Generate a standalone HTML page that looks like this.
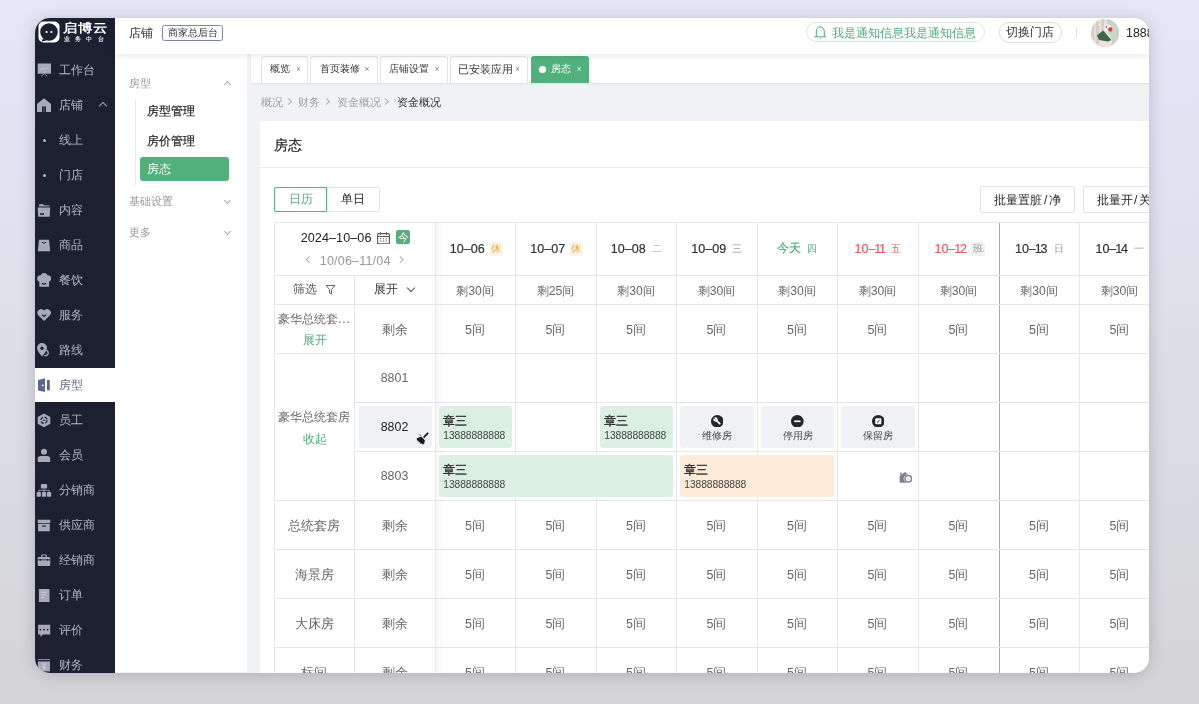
<!DOCTYPE html><html><head><meta charset="utf-8"><style>
*{box-sizing:border-box;margin:0;padding:0}
html,body{width:1199px;height:704px;overflow:hidden}
body{font-family:"Liberation Sans",sans-serif;position:relative;background:linear-gradient(180deg,#e5e7f6 0%,#e0e2f0 30%,#dbdce3 60%,#d5d5d7 100%)}
.shadow{position:absolute;left:35px;top:18px;width:1114px;height:655px;border-radius:16px;box-shadow:0 2px 16px rgba(60,60,90,.26)}
.win{position:absolute;left:0;top:0;width:1199px;height:704px;will-change:transform;clip-path:inset(18px 50px 31px 35px round 15px)}
.bg{position:absolute;left:35px;top:18px;width:1114px;height:655px;background:#f0f2f6}
.side{position:absolute;left:35px;top:18px;width:80px;height:655px;background:#1c2132}
.si{position:absolute;left:35px;width:80px;height:35px;color:#b3b6c2;font-size:12.4px;line-height:35px}
.si span{position:absolute;left:24px;top:0}
.si svg{position:absolute;left:2px;top:10px;overflow:visible}
.si .dot{position:absolute;left:7.5px;top:16px;width:3px;height:3px;border-radius:50%;background:#b3b6c2}
.si.act{background:#fff;color:#5c6680;height:34px;line-height:34px}
.si.act svg{top:10px}
.chev{position:absolute;left:65px;top:15px;width:6px;height:6px;border-left:1px solid #9ea1ae;border-top:1px solid #9ea1ae;transform:rotate(45deg)}
.hdr{position:absolute;left:115px;top:18px;width:1034px;height:36px;background:#fff;box-shadow:0 2px 6px rgba(30,30,70,.09);z-index:2}
.sub{position:absolute;left:115px;top:54px;width:131.5px;height:618px;background:#fff}
.tabs{position:absolute;left:251.3px;top:54px;width:900px;height:28.7px;background:#fff;box-shadow:0 1px 2px rgba(0,0,0,.08)}
.tab{position:absolute;top:56.2px;height:26.5px;border:1px solid #e4e5ea;border-bottom:none;border-radius:3px 3px 0 0;background:#fff;font-size:10.3px;color:#333;line-height:24px;white-space:nowrap}
.tab span{position:absolute;top:0}
.tab i{font-style:normal;font-size:8.6px;color:#888;position:absolute;top:-.5px}
.card{position:absolute;left:260px;top:121px;width:900px;height:560px;background:#fff}
.t{position:absolute;white-space:nowrap;line-height:1}
.vl{position:absolute;width:1px;background:#e6e6ee}
.hl{position:absolute;height:1px;background:#e6e6ee}
.c{position:absolute;text-align:center;white-space:nowrap;display:flex;align-items:center;justify-content:center}
.gray{color:#666}
.dk{color:#222}
.chd{position:absolute;width:5px;height:5px;border-right:1px solid #aaa;border-bottom:1px solid #aaa;transform:rotate(45deg)}
.chu{position:absolute;width:5px;height:5px;border-left:1px solid #aaa;border-top:1px solid #aaa;transform:rotate(45deg)}
.bk{position:absolute;border-radius:3px;padding-left:4.3px;}
.bk b{position:absolute;left:4.3px;font-size:12px;color:#333;font-weight:500;-webkit-text-stroke:.4px #333;line-height:1}
.bk span{position:absolute;left:4.3px;font-size:10.3px;letter-spacing:-.1px;color:#444;line-height:1}
</style></head><body><div class="shadow"></div><div class="win"><div class="bg"></div>
<div class="side"></div>
<svg class="t" style="left:37.5px;top:20.5px" width="22" height="22" viewBox="0 0 22 22"><rect x="0.5" y="0.5" width="21" height="21" rx="5" fill="#fff"/><path d="M11 2.2a8.8 8.8 0 1 0 0 17.6 8.8 8.8 0 0 0 0-17.6z" fill="#1c2132"/><path d="M5 17.5L3.5 20.5 8.5 19.5z" fill="#1c2132"/><circle cx="8.6" cy="11" r="1.1" fill="#fff"/><circle cx="13.4" cy="11" r="1.1" fill="#fff"/></svg>
<div class="t" style="left:62.5px;top:21.8px;font-size:12px;color:#fff;font-weight:700;letter-spacing:.3px;transform:scaleX(1.2);transform-origin:0 0">启博云</div>
<div class="t" style="left:64px;top:36.5px;font-size:5.8px;color:#e6e6ea;font-weight:700;letter-spacing:5.2px">业务中台</div>
<div class="si" style="top:53.0px"><svg width="14" height="14" viewBox="0 0 14 14" fill="#a7aab9"><path d="M.7 .5h13.3v10.2H.7z"/><path d="M3.3 7.6l2.6-2.6 2 1.6 3-3" stroke="#c9ccd8" stroke-width=".9" fill="none"/><path d="M7.3 10.7L4.2 13.3M7.3 10.7l3.1 2.6" stroke="#a7aab9" stroke-width=".8" fill="none"/></svg><span>工作台</span></div>
<div class="si" style="top:88.0px"><svg width="14" height="14" viewBox="0 0 14 14" fill="#a7aab9"><path d="M7 .3L0 6v8h5V8.6h4V14h5V6z"/><path d="M5.8 9.4h2.4V14H5.8z" fill="#3a3f52"/></svg><span>店铺</span><b class="chev"></b></div>
<div class="si" style="top:123.0px"><i class="dot"></i><span>线上</span></div>
<div class="si" style="top:158.0px"><i class="dot"></i><span>门店</span></div>
<div class="si" style="top:193.0px"><svg width="14" height="14" viewBox="0 0 14 14" fill="#a7aab9"><path d="M2 3.6V2.2Q2 .9 3.3 .9h2.6l1.3 1.3h4Q12.5 2.2 12.5 3.6z" fill="#989bab"/><path d="M.7 4.4h12.5l-.5 9.4H1.2z"/><path d="M3 10.3h4v1.5H3z" fill="#1c2132"/></svg><span>内容</span></div>
<div class="si" style="top:228.0px"><svg width="14" height="14" viewBox="0 0 14 14" fill="#a7aab9"><path d="M2 1.8h10l1.2 11.4H.8z"/><path d="M5 4.3q2 1.8 4 0" stroke="#1c2132" stroke-width="1" fill="none"/></svg><span>商品</span></div>
<div class="si" style="top:263.0px"><svg width="14" height="14" viewBox="0 0 14 14" fill="#a7aab9"><circle cx="3.5" cy="5.5" r="3.3"/><circle cx="10.8" cy="5.5" r="3.3"/><circle cx="7.1" cy="3.6" r="3.5"/><path d="M2.3 6h9.7v7.8H2.3z"/><path d="M5 10.3q2.1 1.6 4.2 0" stroke="#1c2132" stroke-width="1.1" fill="none"/></svg><span>餐饮</span></div>
<div class="si" style="top:298.0px"><svg width="14" height="14" viewBox="0 0 14 14" fill="#a7aab9"><path d="M7.1 13L1.2 7.3A3.5 3.5 0 0 1 7.1 2.6a3.5 3.5 0 0 1 5.9 4.7z"/><path d="M5 6.6l2.1 1.9 2.1-1.9" stroke="#1c2132" stroke-width="1.2" fill="none"/></svg><span>服务</span></div>
<div class="si" style="top:333.0px"><svg width="14" height="14" viewBox="0 0 14 14" fill="#a7aab9"><path d="M5 0A5 5 0 0 0 0 5c0 3.3 5 8.4 5 8.4S10 8.3 10 5A5 5 0 0 0 5 0z"/><circle cx="5" cy="5.3" r="1.7" fill="#1c2132"/><path d="M9.6 7.4a2.6 2.6 0 1 1-2.3 5" stroke="#a7aab9" stroke-width="1.5" fill="none"/></svg><span>路线</span></div>
<div class="si act" style="top:368.0px"><svg width="14" height="14" viewBox="0 0 14 14" fill="#5a6a8e"><path d="M1 2L8 .3V14L1 12.5z"/><path d="M10 2h2.8v10.5H10z"/><circle cx="5.8" cy="7.3" r=".9" fill="#fff"/></svg><span>房型</span></div>
<div class="si" style="top:403.0px"><svg width="14" height="14" viewBox="0 0 14 14" fill="#a7aab9"><path d="M7 .5l6.3 3.5v6.7L7 14.2.7 10.7V4z"/><circle cx="7" cy="7.3" r="3.1" fill="none" stroke="#1c2132" stroke-width="1.3" stroke-dasharray="3.4 1.5"/><path d="M6 7.3h2" stroke="#1c2132" stroke-width="1"/></svg><span>员工</span></div>
<div class="si" style="top:438.0px"><svg width="14" height="14" viewBox="0 0 14 14" fill="#a7aab9"><circle cx="7" cy="3.8" r="3"/><path d="M.7 14v-3.2Q.7 8 4 8h6Q13.2 8 13.2 10.8V14z"/></svg><span>会员</span></div>
<div class="si" style="top:473.0px"><svg width="14" height="14" viewBox="0 0 14 14" fill="#a7aab9"><rect x="3.9" y=".9" width="6.2" height="4.7" rx=".8"/><rect x="-.3" y="9" width="4.2" height="4.8" rx=".8"/><rect x="4.9" y="9" width="4.2" height="4.8" rx=".8"/><rect x="9.9" y="9" width="4.3" height="4.8" rx=".8"/><path d="M7 5.6v3.4M1.8 9V7.3h10.3V9" stroke="#a7aab9" stroke-width=".8" fill="none"/></svg><span>分销商</span></div>
<div class="si" style="top:508.0px"><svg width="14" height="14" viewBox="0 0 14 14" fill="#a7aab9"><path d="M.7 1.8h12.5V5H.7zM1.1 5.8h11.7v7.4H1.1z"/><path d="M5 8.1h4" stroke="#1c2132" stroke-width="1.1"/></svg><span>供应商</span></div>
<div class="si" style="top:543.0px"><svg width="14" height="14" viewBox="0 0 14 14" fill="#a7aab9"><path d="M4.7 4V2.6Q4.7 2 5.3 2h3.4Q9.3 2 9.3 2.6V4" stroke="#a7aab9" stroke-width="1.1" fill="none"/><rect x=".7" y="4" width="12.5" height="9" rx="1.2"/><path d="M.7 6.8h12.5" stroke="#1c2132" stroke-width=".8"/><rect x="2.5" y="6" width="1.6" height="1.6" fill="#1c2132"/><rect x="9.8" y="6" width="1.6" height="1.6" fill="#1c2132"/></svg><span>经销商</span></div>
<div class="si" style="top:578.0px"><svg width="14" height="14" viewBox="0 0 14 14" fill="#a7aab9"><rect x="1.9" y="1" width="10.6" height="13" rx=".6"/><path d="M4 4.3h6M4 7h5M4 9.5h3" stroke="#cdd0da" stroke-width=".9"/></svg><span>订单</span></div>
<div class="si" style="top:613.0px"><svg width="14" height="14" viewBox="0 0 14 14" fill="#a7aab9"><path d="M1.1 1.7h12.1v9.8H6L3.5 14v-2.5H1.1z"/><circle cx="3.4" cy="6.6" r=".95" fill="#1c2132"/><circle cx="7" cy="6.6" r=".95" fill="#1c2132"/><circle cx="10.6" cy="6.6" r=".95" fill="#1c2132"/></svg><span>评价</span></div>
<div class="si" style="top:648.0px"><svg width="14" height="14" viewBox="0 0 14 14" fill="#a7aab9"><path d="M1 1.5h12" stroke="#a7aab9" stroke-width=".8"/><path d="M1 3.4h12v10H1z"/><path d="M5 5l2 2.5L9 5M7 7.5v4.5M5.3 8.6h3.4M5.3 10.3h3.4" stroke="#d2d4de" stroke-width=".9" fill="none"/></svg><span>财务</span></div>
<div class="hdr">
</div>
<div class="t dk" style="left:129.4px;top:26.5px;font-size:12.4px;z-index:3;color:#333">店铺</div>
<div class="t" style="left:162.3px;top:24.5px;width:61.2px;height:16.3px;border:1px solid #7d87a4;border-radius:2.5px;z-index:3;font-size:10.3px;color:#333;line-height:14.3px;text-align:center">商家总后台</div>
<div class="t" style="left:806.4px;top:22.1px;width:178.6px;height:20.4px;border:1px solid #d3eadc;border-radius:10px;z-index:3"></div>
<svg class="t" style="left:814px;top:26px;z-index:3" width="13" height="13" viewBox="0 0 13 13"><path d="M2.3 10.8V6Q2.3 1.2 6.3 .8 10.3 1.2 10.3 6v4.8M.3 10.8h12" stroke="#4fac79" stroke-width="1" fill="none"/><circle cx="6.3" cy="12.3" r=".6" fill="#4fac79"/></svg>
<div class="t" style="left:831.7px;top:27px;font-size:12.2px;color:#4fac79;z-index:3">我是通知信息我是通知信息</div>
<div class="t" style="left:999.2px;top:22.4px;width:62.4px;height:20.3px;border:1px solid #dcdcdc;border-radius:10px;z-index:3;font-size:12.2px;color:#333;line-height:19.6px;text-align:center">切换门店</div>
<div class="t" style="left:1076px;top:28px;width:1px;height:10px;background:#e0e0e6;z-index:3"></div>
<svg class="t" style="left:1091px;top:18.6px;z-index:3" width="28" height="28" viewBox="0 0 28 28"><defs><clipPath id="av"><circle cx="14" cy="14" r="14"/></clipPath></defs><g clip-path="url(#av)"><rect width="28" height="28" fill="#d6cdc7"/><rect x="17" y="0" width="11" height="28" fill="#c9d4c6"/><rect x="3" y="0" width="2" height="28" fill="#e4ddd8"/><rect x="8" y="0" width="2.5" height="28" fill="#e8e2dd"/><rect x="13" y="0" width="3" height="10" fill="#e2e6e0"/><ellipse cx="14.5" cy="22" rx="6.5" ry="8" fill="#eee4df"/><ellipse cx="16.5" cy="9.5" rx="3.8" ry="4" fill="#f2eeec"/><circle cx="19.3" cy="10.5" r="2.2" fill="#d8443b"/><circle cx="15.3" cy="8" r=".7" fill="#333"/><path d="M6 16.5L12 11.5 20.5 21 17 22.5 8 21z" fill="#3e6744"/></g></svg>
<div class="t" style="left:1126px;top:26.5px;font-size:12.4px;color:#222;z-index:3">18888888888</div>
<div class="sub"></div>
<div class="t" style="left:129px;top:77.8px;font-size:10.8px;color:#999">房型</div>
<div class="chu" style="left:224.5px;top:82px"></div>
<div class="t" style="left:135px;top:99.5px;width:1px;height:85px;background:#e8e8ec"></div>
<div class="t" style="left:147px;top:105.4px;font-size:12.4px;color:#222;font-weight:500;-webkit-text-stroke:.2px #222">房型管理</div>
<div class="t" style="left:147px;top:134.6px;font-size:12.4px;color:#222;font-weight:500;-webkit-text-stroke:.2px #222">房价管理</div>
<div class="t" style="left:139.8px;top:157px;width:89px;height:24px;border-radius:3px;background:#52b07c"></div>
<div class="t" style="left:147px;top:163.4px;font-size:12.4px;color:#fff">房态</div>
<div class="t" style="left:129px;top:196px;font-size:10.8px;color:#999">基础设置</div>
<div class="chd" style="left:224.5px;top:197.5px"></div>
<div class="t" style="left:129px;top:227px;font-size:10.8px;color:#999">更多</div>
<div class="chd" style="left:224.5px;top:228.5px"></div>
<div class="tabs"></div>
<div class="tab" style="left:261.4px;width:46.60000000000002px"><span style="left:7.600000000000023px;">概览</span><i style="left:33.60000000000002px">×</i></div>
<div class="tab" style="left:310.3px;width:67.5px"><span style="left:8.399999999999977px;">首页装修</span><i style="left:53.19999999999999px">×</i></div>
<div class="tab" style="left:380.3px;width:67.69999999999999px"><span style="left:8.199999999999989px;">店铺设置</span><i style="left:53.19999999999999px">×</i></div>
<div class="tab" style="left:450.3px;width:77.99999999999994px"><span style="left:7.199999999999989px;font-size:10.6px;">已安装应用</span><i style="left:63.69999999999999px">×</i></div>
<div class="tab" style="left:530.8px;width:58.4px;background:#52b07c;border-color:#52b07c;color:#fff"><b style="position:absolute;left:7.7px;top:9.2px;width:7px;height:7px;border-radius:50%;background:#fff"></b><span style="left:19px">房态</span><i style="left:45px;color:#e8f5ee">×</i></div>
<div class="t" style="left:260.6px;top:97.2px;font-size:10.5px;color:#a3a3a3">概况</div>
<div class="t" style="left:285.5px;top:99px;width:5px;height:5px;border-right:1px solid #b0b0b0;border-top:1px solid #b0b0b0;transform:rotate(45deg)"></div>
<div class="t" style="left:298.3px;top:97.2px;font-size:10.5px;color:#a3a3a3">财务</div>
<div class="t" style="left:324.2px;top:99px;width:5px;height:5px;border-right:1px solid #b0b0b0;border-top:1px solid #b0b0b0;transform:rotate(45deg)"></div>
<div class="t" style="left:337px;top:97.2px;font-size:10.5px;color:#a3a3a3">资金概况</div>
<div class="t" style="left:383.3px;top:99px;width:5px;height:5px;border-right:1px solid #b0b0b0;border-top:1px solid #b0b0b0;transform:rotate(45deg)"></div>
<div class="t" style="left:396.7px;top:97.2px;font-size:10.5px;color:#333">资金概况</div>
<div class="card"></div>
<div class="t" style="left:274.2px;top:138px;font-size:14px;color:#222;font-weight:500;-webkit-text-stroke:.2px #222">房态</div>
<div class="t" style="left:260px;top:167px;width:900px;height:1px;background:#ececf1"></div>
<div class="t" style="left:274px;top:187px;width:105.7px;height:25.2px;border:1px solid #e3e3e8;border-radius:2px"></div>
<div class="t" style="left:274px;top:187px;width:53.2px;height:25.2px;border:1px solid #52b07c;border-radius:2px 0 0 2px;font-size:12.1px;color:#52b07c;line-height:23.2px;text-align:center">日历</div>
<div class="t" style="left:327.2px;top:187px;width:52.5px;height:25.2px;font-size:12.1px;color:#222;line-height:25.2px;text-align:center">单日</div>
<div class="t" style="left:980.3px;top:186.1px;width:94.7px;height:27.4px;border:1px solid #e2e2e8;border-radius:2px;font-size:12.1px;color:#222;line-height:26.8px;text-align:center">批量置脏<span style="margin:0 1.6px">/</span>净</div>
<div class="t" style="left:1082.5px;top:186.1px;width:94.7px;height:27.4px;border:1px solid #e2e2e8;border-radius:2px;font-size:12.1px;color:#222;line-height:26.8px;padding-left:13px">批量开<span style="margin:0 1.6px">/</span>关房</div>
<div class="vl" style="left:274px;top:222px;height:500px"></div>
<div class="vl" style="left:354px;top:275px;height:500px"></div>
<div class="vl" style="left:435px;top:222px;height:500px"></div>
<div class="vl" style="left:515px;top:222px;height:500px"></div>
<div class="vl" style="left:596px;top:222px;height:500px"></div>
<div class="vl" style="left:676px;top:222px;height:500px"></div>
<div class="vl" style="left:757px;top:222px;height:500px"></div>
<div class="vl" style="left:837px;top:222px;height:500px"></div>
<div class="vl" style="left:918px;top:222px;height:500px"></div>
<div class="vl" style="left:999px;top:222px;height:500px;width:1.4px;background:#7cc59c"></div>
<div class="vl" style="left:1079px;top:222px;height:500px"></div>
<div class="vl" style="left:1160px;top:222px;height:500px"></div>
<div class="hl" style="left:274px;top:222px;width:900px"></div>
<div class="hl" style="left:274px;top:275px;width:900px"></div>
<div class="hl" style="left:274px;top:304px;width:900px"></div>
<div class="hl" style="left:274px;top:353px;width:900px"></div>
<div class="hl" style="left:354px;top:402px;width:900px"></div>
<div class="hl" style="left:354px;top:451px;width:900px"></div>
<div class="hl" style="left:274px;top:500px;width:900px"></div>
<div class="hl" style="left:274px;top:549px;width:900px"></div>
<div class="hl" style="left:274px;top:598px;width:900px"></div>
<div class="hl" style="left:274px;top:647px;width:900px"></div>
<div class="hl" style="left:274px;top:696px;width:900px"></div>
<div class="t" style="left:436px;top:223px;width:8px;height:480px;background:linear-gradient(90deg,rgba(0,0,0,.035),rgba(0,0,0,0))"></div>
<div class="t" style="left:300.7px;top:231.8px;font-size:12.6px;color:#222;letter-spacing:.08px">2024–10–06</div>
<svg class="t" style="left:377px;top:231.5px" width="13" height="12.5" viewBox="0 0 13 12.5"><rect x=".6" y="1.6" width="11.8" height="10.3" rx="1" fill="none" stroke="#555" stroke-width="1.1"/><path d="M.6 4.5h11.8M3.5 .3v2.5M9.5 .3v2.5" stroke="#555" stroke-width="1.1"/><path d="M3 6.7h1.3M5.9 6.7h1.3M8.8 6.7h1.3M3 9h1.3M5.9 9h1.3M8.8 9h1.3" stroke="#555" stroke-width="1"/></svg>
<div class="t" style="left:396px;top:230.3px;width:14px;height:14px;background:#52b07c;border-radius:2px;color:#fff;font-size:11px;line-height:14px;text-align:center">今</div>
<div class="t" style="left:307px;top:257px;width:4.5px;height:4.5px;border-left:1px solid #aaa;border-bottom:1px solid #aaa;transform:rotate(45deg)"></div>
<div class="t" style="left:319.8px;top:254.6px;font-size:12.6px;color:#999;letter-spacing:.15px">10/06–11/04</div>
<div class="t" style="left:398px;top:257px;width:4.5px;height:4.5px;border-right:1px solid #aaa;border-top:1px solid #aaa;transform:rotate(45deg)"></div>
<div class="c" style="left:435px;top:222px;width:80px;height:53px;padding-left:2.5px"><span style="font-size:12.5px;color:#333;-webkit-text-stroke:.2px #333">10–06</span><span style="margin-left:4px;width:14px;height:14px;font-size:10px;line-height:14px;text-align:center;color:#e6a23c;border-radius:2px;background:#fdf4e6;">休</span></div>
<div class="c" style="left:435px;top:275px;width:80px;height:29px;"><span style="font-size:12.2px;color:#666;position:relative;top:1.5px">剩30间</span></div>
<div class="c" style="left:515px;top:222px;width:81px;height:53px;padding-left:2.5px"><span style="font-size:12.5px;color:#333;-webkit-text-stroke:.2px #333">10–07</span><span style="margin-left:4px;width:14px;height:14px;font-size:10px;line-height:14px;text-align:center;color:#e6a23c;border-radius:2px;background:#fdf4e6;">休</span></div>
<div class="c" style="left:515px;top:275px;width:81px;height:29px;"><span style="font-size:12.2px;color:#666;position:relative;top:1.5px">剩25间</span></div>
<div class="c" style="left:596px;top:222px;width:80px;height:53px;padding-left:2.5px"><span style="font-size:12.5px;color:#333;-webkit-text-stroke:.2px #333">10–08</span><span style="margin-left:4px;width:14px;height:14px;font-size:10px;line-height:14px;text-align:center;color:#999;border-radius:2px;">二</span></div>
<div class="c" style="left:596px;top:275px;width:80px;height:29px;"><span style="font-size:12.2px;color:#666;position:relative;top:1.5px">剩30间</span></div>
<div class="c" style="left:676px;top:222px;width:81px;height:53px;padding-left:2.5px"><span style="font-size:12.5px;color:#333;-webkit-text-stroke:.2px #333">10–09</span><span style="margin-left:4px;width:14px;height:14px;font-size:10px;line-height:14px;text-align:center;color:#999;border-radius:2px;">三</span></div>
<div class="c" style="left:676px;top:275px;width:81px;height:29px;"><span style="font-size:12.2px;color:#666;position:relative;top:1.5px">剩30间</span></div>
<div class="c" style="left:757px;top:222px;width:80px;height:53px;padding-left:2.5px"><span style="font-size:12px;color:#4fac79;-webkit-text-stroke:.2px #4fac79">今天</span><span style="margin-left:4px;width:14px;height:14px;font-size:10px;line-height:14px;text-align:center;color:#4fac79;border-radius:2px;">四</span></div>
<div class="c" style="left:757px;top:275px;width:80px;height:29px;"><span style="font-size:12.2px;color:#666;position:relative;top:1.5px">剩30间</span></div>
<div class="c" style="left:837px;top:222px;width:81px;height:53px;padding-left:2.5px"><span style="font-size:12.5px;color:#ef5b5b;-webkit-text-stroke:.2px #ef5b5b">10<i style="font-style:normal;letter-spacing:-1.1px">–</i><i style="font-style:normal;letter-spacing:-2.2px">1</i><i style="font-style:normal;letter-spacing:-1.1px">1</i></span><span style="margin-left:4px;width:14px;height:14px;font-size:10px;line-height:14px;text-align:center;color:#ef5b5b;border-radius:2px;">五</span></div>
<div class="c" style="left:837px;top:275px;width:81px;height:29px;"><span style="font-size:12.2px;color:#666;position:relative;top:1.5px">剩30间</span></div>
<div class="c" style="left:918px;top:222px;width:81px;height:53px;padding-left:2.5px"><span style="font-size:12.5px;color:#ef5b5b;-webkit-text-stroke:.2px #ef5b5b">10<i style="font-style:normal;letter-spacing:-1.1px">–</i><i style="font-style:normal;letter-spacing:-1.1px">1</i>2</span><span style="margin-left:4px;width:14px;height:14px;font-size:10px;line-height:14px;text-align:center;color:#999;border-radius:2px;background:#f0f0f2;">班</span></div>
<div class="c" style="left:918px;top:275px;width:81px;height:29px;"><span style="font-size:12.2px;color:#666;position:relative;top:1.5px">剩30间</span></div>
<div class="c" style="left:999px;top:222px;width:80px;height:53px;padding-left:2.5px"><span style="font-size:12.5px;color:#333;-webkit-text-stroke:.2px #333">10<i style="font-style:normal;letter-spacing:-1.1px">–</i><i style="font-style:normal;letter-spacing:-1.1px">1</i>3</span><span style="margin-left:4px;width:14px;height:14px;font-size:10px;line-height:14px;text-align:center;color:#999;border-radius:2px;">日</span></div>
<div class="c" style="left:999px;top:275px;width:80px;height:29px;"><span style="font-size:12.2px;color:#666;position:relative;top:1.5px">剩30间</span></div>
<div class="c" style="left:1079px;top:222px;width:81px;height:53px;padding-left:2.5px"><span style="font-size:12.5px;color:#333;-webkit-text-stroke:.2px #333">10<i style="font-style:normal;letter-spacing:-1.1px">–</i><i style="font-style:normal;letter-spacing:-1.1px">1</i>4</span><span style="margin-left:4px;width:14px;height:14px;font-size:10px;line-height:14px;text-align:center;color:#999;border-radius:2px;">一</span></div>
<div class="c" style="left:1079px;top:275px;width:81px;height:29px;"><span style="font-size:12.2px;color:#666;position:relative;top:1.5px">剩30间</span></div>
<div class="c" style="left:274px;top:275px;width:80px;height:29px;"><span style="font-size:12.1px;color:#555">筛选</span><svg style="margin-left:8px" width="11" height="11" viewBox="0 0 11 11"><path d="M1 1.5h9L6.5 5.5V10L4.5 9V5.5z" fill="none" stroke="#666" stroke-width="1"/></svg></div>
<div class="c" style="left:354px;top:275px;width:81px;height:29px;padding-right:2px"><span style="font-size:12.1px;color:#333">展开</span><span style="display:inline-block;margin-left:10px;margin-top:-4px;width:6px;height:6px;border-right:1px solid #555;border-bottom:1px solid #555;transform:rotate(45deg)"></span></div>
<div class="t" style="left:278.2px;top:313.3px;font-size:12.1px;color:#666">豪华总统套<span style="letter-spacing:.8px">...</span></div>
<div class="t" style="left:302.5px;top:333.8px;font-size:12.1px;color:#4fac79">展开</div>
<div class="c" style="left:354px;top:304px;width:81px;height:49px;"><span style="font-size:12.5px;color:#666;position:relative;top:1.5px">剩余</span></div>
<div class="c" style="left:435px;top:304px;width:80px;height:49px;"><span style="font-size:12.5px;color:#666;position:relative;top:1.5px">5间</span></div>
<div class="c" style="left:515px;top:304px;width:81px;height:49px;"><span style="font-size:12.5px;color:#666;position:relative;top:1.5px">5间</span></div>
<div class="c" style="left:596px;top:304px;width:80px;height:49px;"><span style="font-size:12.5px;color:#666;position:relative;top:1.5px">5间</span></div>
<div class="c" style="left:676px;top:304px;width:81px;height:49px;"><span style="font-size:12.5px;color:#666;position:relative;top:1.5px">5间</span></div>
<div class="c" style="left:757px;top:304px;width:80px;height:49px;"><span style="font-size:12.5px;color:#666;position:relative;top:1.5px">5间</span></div>
<div class="c" style="left:837px;top:304px;width:81px;height:49px;"><span style="font-size:12.5px;color:#666;position:relative;top:1.5px">5间</span></div>
<div class="c" style="left:918px;top:304px;width:81px;height:49px;"><span style="font-size:12.5px;color:#666;position:relative;top:1.5px">5间</span></div>
<div class="c" style="left:999px;top:304px;width:80px;height:49px;"><span style="font-size:12.5px;color:#666;position:relative;top:1.5px">5间</span></div>
<div class="c" style="left:1079px;top:304px;width:81px;height:49px;"><span style="font-size:12.5px;color:#666;position:relative;top:1.5px">5间</span></div>
<div class="t" style="left:278.2px;top:411px;font-size:12.1px;color:#666">豪华总统套房</div>
<div class="t" style="left:302.5px;top:432.6px;font-size:12.1px;color:#4fac79">收起</div>
<div class="c" style="left:354px;top:353px;width:81px;height:49px;"><span style="font-size:12.4px;color:#666;position:relative;top:.7px">8801</span></div>
<div class="t" style="left:358.5px;top:406.3px;width:73.5px;height:41.7px;background:#f0f1f5;border-radius:2px"></div>
<div class="c" style="left:354px;top:402px;width:81px;height:49px;"><span style="font-size:12.4px;color:#222;position:relative;top:.7px">8802</span></div>
<svg class="t" style="left:415px;top:432px" width="14" height="14" viewBox="0 0 14 14"><path d="M12.6 1.4L9.2 4.9" stroke="#1a1a1a" stroke-width="1.9" stroke-linecap="round"/><path d="M6.2 4.6L9.9 8.3 9 12.4 8 11.5 7.6 12.8 6.4 11.2 5.6 12 4.8 10.1 3.8 10.6 3.4 8.7 2.2 8.8 1.6 6.4z" fill="#1a1a1a"/><rect x="4.1" y="2.1" width="1.6" height="1.6" fill="#8a8a8a"/></svg>
<div class="c" style="left:354px;top:451px;width:81px;height:49px;"><span style="font-size:12.4px;color:#666;position:relative;top:.7px">8803</span></div>
<div class="bk" style="left:439px;top:406.3px;width:73px;height:41.69999999999999px;background:#dcefe3"><b style="top:9.1px">章三</b><span style="top:24.3px">13888888888</span></div>
<div class="bk" style="left:600px;top:406.3px;width:73px;height:41.69999999999999px;background:#dcefe3"><b style="top:9.1px">章三</b><span style="top:24.3px">13888888888</span></div>
<div class="bk" style="left:439px;top:455.3px;width:234px;height:41.69999999999999px;background:#dcefe3"><b style="top:9.1px">章三</b><span style="top:24.3px">13888888888</span></div>
<div class="bk" style="left:680px;top:455.3px;width:154px;height:41.69999999999999px;background:#fcebd8"><b style="top:9.1px">章三</b><span style="top:24.3px">13888888888</span></div>
<div class="t" style="left:680px;top:406.3px;width:74px;height:41.69999999999999px;background:#f0f1f5;border-radius:3px"></div>
<svg class="t" style="left:710.9px;top:414.5px" width="12.6" height="12.6" viewBox="0 0 14 14"><circle cx="7" cy="7" r="7" fill="#262626"/><path d="M4.2 4.2l5.5 5.5" stroke="#fff" stroke-width="1.9" stroke-linecap="round"/><circle cx="5" cy="5" r="2.4" fill="#fff"/><path d="M3.2 3.2l1.6 1.6" stroke="#262626" stroke-width="1.1"/></svg>
<div class="t" style="left:702.2px;top:430.7px;width:30px;text-align:center;font-size:9.6px;color:#444">维修房</div>
<div class="t" style="left:761px;top:406.3px;width:73px;height:41.69999999999999px;background:#f0f1f5;border-radius:3px"></div>
<svg class="t" style="left:791.4px;top:414.5px" width="12.6" height="12.6" viewBox="0 0 14 14"><circle cx="7" cy="7" r="7" fill="#262626"/><rect x="3.5" y="6.1" width="7" height="1.8" fill="#fff"/></svg>
<div class="t" style="left:782.7px;top:430.7px;width:30px;text-align:center;font-size:9.6px;color:#444">停用房</div>
<div class="t" style="left:841px;top:406.3px;width:74px;height:41.69999999999999px;background:#f0f1f5;border-radius:3px"></div>
<svg class="t" style="left:871.9px;top:414.5px" width="12.6" height="12.6" viewBox="0 0 14 14"><circle cx="7" cy="7" r="7" fill="#262626"/><rect x="3.6" y="3.6" width="6.8" height="6.8" rx="1.2" fill="#fff"/><path d="M5.3 7.2l1.2 1 2.2-2.3" stroke="#262626" stroke-width="1" fill="none"/></svg>
<div class="t" style="left:863.2px;top:430.7px;width:30px;text-align:center;font-size:9.6px;color:#444">保留房</div>
<svg class="t" style="left:898px;top:470px" width="14" height="14" viewBox="0 0 14 14"><path d="M1.6 12.8V6L7 2l3 2.3V12.8z" fill="#7d8290"/><rect x="2.2" y="2.6" width="1.4" height="3" fill="#7d8290"/><circle cx="10.3" cy="8.8" r="4.6" fill="#fff"/><circle cx="10.3" cy="8.8" r="3.3" fill="#fff" stroke="#7d8290" stroke-width="1.5"/><path d="M9 8.8h2.2M10.3 7.7l1.1 1.1-1.1 1.1" stroke="#c5c8d0" stroke-width=".8" fill="none"/></svg>
<div class="c" style="left:274px;top:500px;width:80px;height:49px;"><span style="font-size:12.5px;color:#666;position:relative;top:1.5px">总统套房</span></div>
<div class="c" style="left:354px;top:500px;width:81px;height:49px;"><span style="font-size:12.5px;color:#666;position:relative;top:1.5px">剩余</span></div>
<div class="c" style="left:435px;top:500px;width:80px;height:49px;"><span style="font-size:12.5px;color:#666;position:relative;top:1.5px">5间</span></div>
<div class="c" style="left:515px;top:500px;width:81px;height:49px;"><span style="font-size:12.5px;color:#666;position:relative;top:1.5px">5间</span></div>
<div class="c" style="left:596px;top:500px;width:80px;height:49px;"><span style="font-size:12.5px;color:#666;position:relative;top:1.5px">5间</span></div>
<div class="c" style="left:676px;top:500px;width:81px;height:49px;"><span style="font-size:12.5px;color:#666;position:relative;top:1.5px">5间</span></div>
<div class="c" style="left:757px;top:500px;width:80px;height:49px;"><span style="font-size:12.5px;color:#666;position:relative;top:1.5px">5间</span></div>
<div class="c" style="left:837px;top:500px;width:81px;height:49px;"><span style="font-size:12.5px;color:#666;position:relative;top:1.5px">5间</span></div>
<div class="c" style="left:918px;top:500px;width:81px;height:49px;"><span style="font-size:12.5px;color:#666;position:relative;top:1.5px">5间</span></div>
<div class="c" style="left:999px;top:500px;width:80px;height:49px;"><span style="font-size:12.5px;color:#666;position:relative;top:1.5px">5间</span></div>
<div class="c" style="left:1079px;top:500px;width:81px;height:49px;"><span style="font-size:12.5px;color:#666;position:relative;top:1.5px">5间</span></div>
<div class="c" style="left:274px;top:549px;width:80px;height:49px;"><span style="font-size:12.5px;color:#666;position:relative;top:1.5px">海景房</span></div>
<div class="c" style="left:354px;top:549px;width:81px;height:49px;"><span style="font-size:12.5px;color:#666;position:relative;top:1.5px">剩余</span></div>
<div class="c" style="left:435px;top:549px;width:80px;height:49px;"><span style="font-size:12.5px;color:#666;position:relative;top:1.5px">5间</span></div>
<div class="c" style="left:515px;top:549px;width:81px;height:49px;"><span style="font-size:12.5px;color:#666;position:relative;top:1.5px">5间</span></div>
<div class="c" style="left:596px;top:549px;width:80px;height:49px;"><span style="font-size:12.5px;color:#666;position:relative;top:1.5px">5间</span></div>
<div class="c" style="left:676px;top:549px;width:81px;height:49px;"><span style="font-size:12.5px;color:#666;position:relative;top:1.5px">5间</span></div>
<div class="c" style="left:757px;top:549px;width:80px;height:49px;"><span style="font-size:12.5px;color:#666;position:relative;top:1.5px">5间</span></div>
<div class="c" style="left:837px;top:549px;width:81px;height:49px;"><span style="font-size:12.5px;color:#666;position:relative;top:1.5px">5间</span></div>
<div class="c" style="left:918px;top:549px;width:81px;height:49px;"><span style="font-size:12.5px;color:#666;position:relative;top:1.5px">5间</span></div>
<div class="c" style="left:999px;top:549px;width:80px;height:49px;"><span style="font-size:12.5px;color:#666;position:relative;top:1.5px">5间</span></div>
<div class="c" style="left:1079px;top:549px;width:81px;height:49px;"><span style="font-size:12.5px;color:#666;position:relative;top:1.5px">5间</span></div>
<div class="c" style="left:274px;top:598px;width:80px;height:49px;"><span style="font-size:12.5px;color:#666;position:relative;top:1.5px">大床房</span></div>
<div class="c" style="left:354px;top:598px;width:81px;height:49px;"><span style="font-size:12.5px;color:#666;position:relative;top:1.5px">剩余</span></div>
<div class="c" style="left:435px;top:598px;width:80px;height:49px;"><span style="font-size:12.5px;color:#666;position:relative;top:1.5px">5间</span></div>
<div class="c" style="left:515px;top:598px;width:81px;height:49px;"><span style="font-size:12.5px;color:#666;position:relative;top:1.5px">5间</span></div>
<div class="c" style="left:596px;top:598px;width:80px;height:49px;"><span style="font-size:12.5px;color:#666;position:relative;top:1.5px">5间</span></div>
<div class="c" style="left:676px;top:598px;width:81px;height:49px;"><span style="font-size:12.5px;color:#666;position:relative;top:1.5px">5间</span></div>
<div class="c" style="left:757px;top:598px;width:80px;height:49px;"><span style="font-size:12.5px;color:#666;position:relative;top:1.5px">5间</span></div>
<div class="c" style="left:837px;top:598px;width:81px;height:49px;"><span style="font-size:12.5px;color:#666;position:relative;top:1.5px">5间</span></div>
<div class="c" style="left:918px;top:598px;width:81px;height:49px;"><span style="font-size:12.5px;color:#666;position:relative;top:1.5px">5间</span></div>
<div class="c" style="left:999px;top:598px;width:80px;height:49px;"><span style="font-size:12.5px;color:#666;position:relative;top:1.5px">5间</span></div>
<div class="c" style="left:1079px;top:598px;width:81px;height:49px;"><span style="font-size:12.5px;color:#666;position:relative;top:1.5px">5间</span></div>
<div class="c" style="left:274px;top:647px;width:80px;height:49px;"><span style="font-size:12.5px;color:#666;position:relative;top:1.5px">标间</span></div>
<div class="c" style="left:354px;top:647px;width:81px;height:49px;"><span style="font-size:12.5px;color:#666;position:relative;top:1.5px">剩余</span></div>
<div class="c" style="left:435px;top:647px;width:80px;height:49px;"><span style="font-size:12.5px;color:#666;position:relative;top:1.5px">5间</span></div>
<div class="c" style="left:515px;top:647px;width:81px;height:49px;"><span style="font-size:12.5px;color:#666;position:relative;top:1.5px">5间</span></div>
<div class="c" style="left:596px;top:647px;width:80px;height:49px;"><span style="font-size:12.5px;color:#666;position:relative;top:1.5px">5间</span></div>
<div class="c" style="left:676px;top:647px;width:81px;height:49px;"><span style="font-size:12.5px;color:#666;position:relative;top:1.5px">5间</span></div>
<div class="c" style="left:757px;top:647px;width:80px;height:49px;"><span style="font-size:12.5px;color:#666;position:relative;top:1.5px">5间</span></div>
<div class="c" style="left:837px;top:647px;width:81px;height:49px;"><span style="font-size:12.5px;color:#666;position:relative;top:1.5px">5间</span></div>
<div class="c" style="left:918px;top:647px;width:81px;height:49px;"><span style="font-size:12.5px;color:#666;position:relative;top:1.5px">5间</span></div>
<div class="c" style="left:999px;top:647px;width:80px;height:49px;"><span style="font-size:12.5px;color:#666;position:relative;top:1.5px">5间</span></div>
<div class="c" style="left:1079px;top:647px;width:81px;height:49px;"><span style="font-size:12.5px;color:#666;position:relative;top:1.5px">5间</span></div>
</div></body></html>
